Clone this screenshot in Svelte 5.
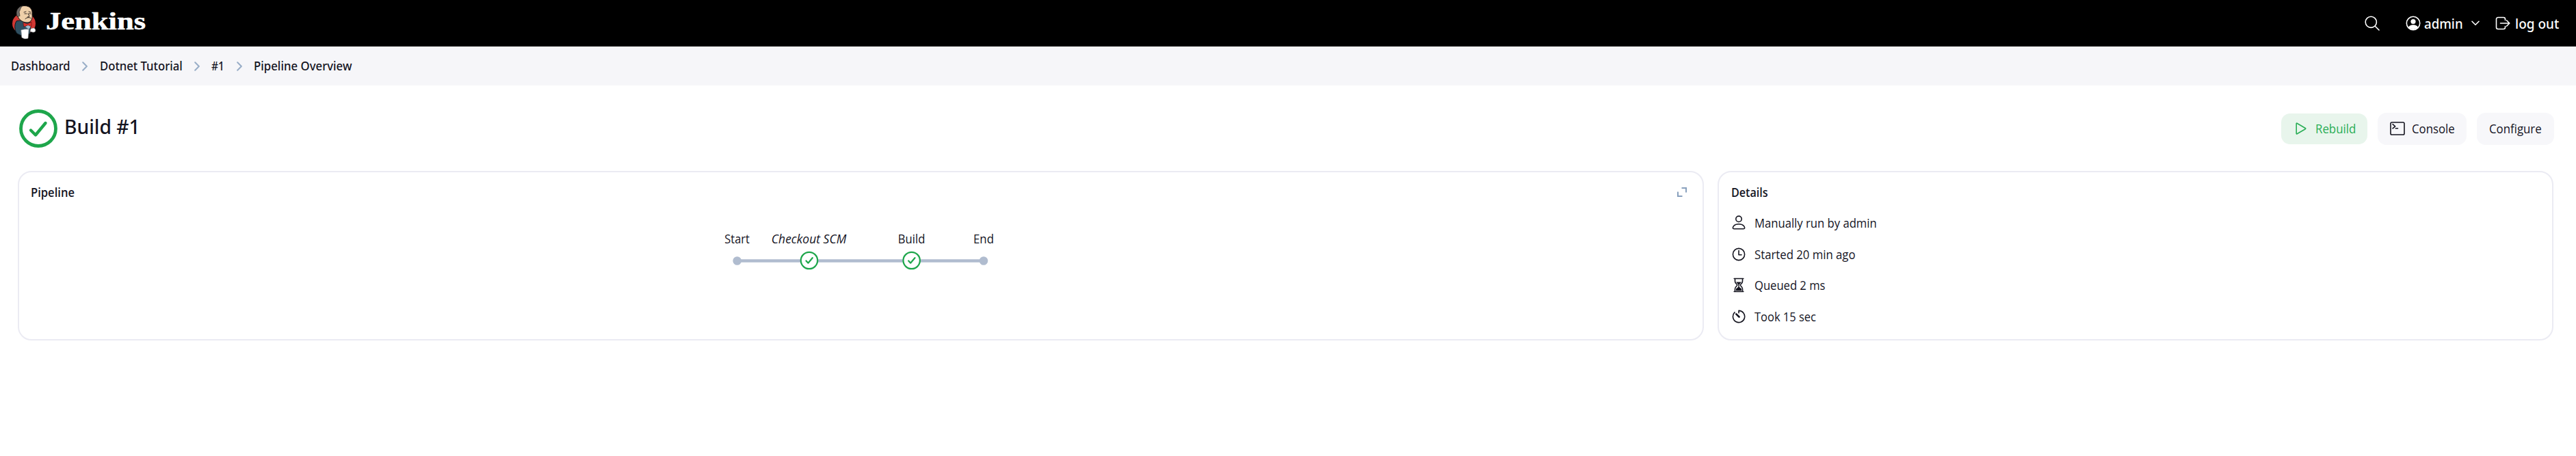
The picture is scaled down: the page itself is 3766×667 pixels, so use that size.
<script>
  const crumbs = [
    { text: 'Dashboard', width: 86.6 },
    { text: 'Dotnet Tutorial', width: 120.8 },
    { text: '#1', width: 19 },
    { text: 'Pipeline Overview', width: 143.5 }
  ];
  const details = [
    { icon: 'person', text: 'Manually run by admin', width: 178.7 },
    { icon: 'clock', text: 'Started 20 min ago', width: 147.5 },
    { icon: 'hourglass', text: 'Queued 2 ms', width: 103.4 },
    { icon: 'timer', text: 'Took 15 sec', width: 90 }
  ];
</script>

{#snippet label(text, width, size, weight)}
  <svg class="label" class:medium={weight === 500} {width} height="24">
    <text x="0" y={12 + size * 0.388} font-size={size} font-weight={weight} textLength={width} lengthAdjust="spacingAndGlyphs">{text}</text>
  </svg>
{/snippet}

<header class="top">
  <div class="brand">
    <svg class="mascot" width="36" height="52" viewBox="0 0 36 52">
      <ellipse cx="18" cy="28.500" rx="17" ry="15.500" fill="#d33833" />
      <path d="M7 25 C3 31 5 40 8 43 L16 47 L27 43 L28 27 L20 23 Z" fill="#2f4f60" stroke="#0d1a22" stroke-width="1" />
      <path d="M8 14 C7 5 13 2.500 19 2.500 C27 2.500 31 8 30 15 C31 22 28 27 23 27 C15 27 9 22 8 14Z" fill="#efd0aa" stroke="#1b1512" stroke-width="1" />
      <path d="M8 18 C5 11 9 4 16 2.500 C12 6 13 9 11 11 L12 17Z" fill="#6f6b68" stroke="#1b1512" stroke-width=".6" />
      <path d="M18 12l3-1M25 11l3 1M19 14h3M25 14h3M24 14l2 4-3 1M20 21.500q4-3.500 8-1" fill="none" stroke="#352b25" stroke-width="1" />
      <path d="M17 27l6 2 6-3v7l-5-2-6 2z" fill="#d7302b" stroke="#5d1210" stroke-width=".6" />
      <path d="M20 33l4-2 4 2-3 4z" fill="#9fbdd0" />
      <path d="M14 38q6-2 11-1l-1 13q-5 2-9-1z" fill="#fff" stroke="#aaa" stroke-width=".6" />
      <path d="M28 36q6-3 7 2q0 4-5 3l-3-1z" fill="#fff" stroke="#666" stroke-width=".6" />
    </svg>
    <svg class="word" width="146" height="40"><text x="0" y="28.500" textLength="146" lengthAdjust="spacingAndGlyphs">Jenkins</text></svg>
  </div>
  <nav class="tools">
    <svg class="search" width="22" height="22" viewBox="0 0 22 22"><circle cx="9.300" cy="9.300" r="8.100" /><path d="M15.200 15.200l5.800 5.800" /></svg>
    <svg class="avatar" width="22" height="22" viewBox="0 0 22 22"><circle cx="11" cy="11" r="9.700" /><circle cx="11" cy="8.500" r="3.600" class="solid" /><path d="M4 17c2-5 12-5 14 0c-3 4-11 4-14 0z" class="solid" /></svg>
    {@render label('admin', 56.6, 20, 500)}
    <svg class="caret" width="12" height="8" viewBox="0 0 12 8"><path d="M1 1.300l5 5 5-5" /></svg>
    <svg class="exit" width="22" height="20" viewBox="0 0 22 20"><path d="M14.500 5.500V4a2.500 2.500 0 0 0-2.500-2.500H4A2.500 2.500 0 0 0 1.500 4v12A2.500 2.500 0 0 0 4 18.500h8a2.500 2.500 0 0 0 2.500-2.500v-1.500M7.500 10h13.300M16.500 5.800l4.300 4.200-4.300 4.200" /></svg>
    {@render label('log out', 64.3, 20, 500)}
  </nav>
</header>

<div class="crumbs">
  {#each crumbs as c, i}
    {#if i}<svg class="sep" width="8" height="14" viewBox="0 0 8 14"><path d="M1.200 1.300L6.900 7l-5.700 5.700" /></svg>{/if}
    {@render label(c.text, c.width, 18, 500)}
  {/each}
</div>

<main>
  <div class="titlebar">
    <svg class="status" width="56" height="56" viewBox="0 0 56 56"><circle cx="28" cy="28" r="25.500" stroke-width="4.800" /><path d="M17 30.500l7 7L38.500 20" stroke-width="4.400" /></svg>
    <h1>{@render label('Build #1', 110.7, 29, 500)}</h1>
    <div class="actions">
      <button class="rebuild"><svg width="16" height="18" viewBox="0 0 16 18"><path d="M2 1.200Q1.200 1 1.200 2v14q0 1.200 1 .7L14.300 9.700q.9-.6 0-1.200z" /></svg>{@render label('Rebuild', 59.3, 18, 400)}</button>
      <button class="console"><svg width="22" height="20" viewBox="0 0 22 20"><rect x="1" y="1" width="20" height="18" rx="1.800" /><path d="M4 3.700L7.700 6.800 4 9.800M8.300 9.800h3.200" /></svg>{@render label('Console', 62.8, 18, 400)}</button>
      <button class="configure">{@render label('Configure', 76.7, 18, 400)}</button>
    </div>
  </div>

  <div class="cards">
    <section class="card">
      <div class="head">
        <h2>{@render label('Pipeline', 64, 18, 600)}</h2>
        <svg class="expand" width="14" height="14" viewBox="0 0 14 14"><path d="M6.500 1H13v6.500M1 6.500V13h6.500" /></svg>
      </div>
      <svg class="graph" width="420" height="70" viewBox="1048 330 420 70">
        <path d="M1077.700 381.500H1438" class="rail" />
        <circle cx="1077.700" cy="381.500" r="6.300" class="dot" />
        <circle cx="1438" cy="381.500" r="6.300" class="dot" />
        {#each [1183, 1332.7] as x}
          <circle cx={x} cy="381" r="12.200" class="node" />
          <path d="M{x - 4.5} 381.500l3 3.200 6.300-7.500" class="tick" />
        {/each}
        <g font-size="18">
          <text x="1059.300" y="356" textLength="36.500" lengthAdjust="spacingAndGlyphs">Start</text>
          <text x="1127.800" y="356" textLength="109.500" lengthAdjust="spacingAndGlyphs" font-style="italic">Checkout SCM</text>
          <text x="1312.800" y="356" textLength="39.700" lengthAdjust="spacingAndGlyphs">Build</text>
          <text x="1423" y="356" textLength="30" lengthAdjust="spacingAndGlyphs">End</text>
        </g>
      </svg>
    </section>
    <section class="card info">
      <div class="head"><h2>{@render label('Details', 53.6, 18, 600)}</h2></div>
      <ul>
        {#each details as d}
          <li>
            <svg class="glyph" width="20" height="22" viewBox="0 0 20 22">
              {#if d.icon === 'person'}
                <circle cx="10" cy="5.300" r="4.200" /><path d="M3.200 19.800C.6 19.800 1.200 16.800 2.800 15.200 6 12 14 12 17.200 15.200c1.600 1.600 2.200 4.600-.4 4.600z" />
              {:else if d.icon === 'clock'}
                <circle cx="10" cy="11" r="8.600" /><path d="M10 5.500v6.300h4" />
              {:else if d.icon === 'hourglass'}
                <path d="M3.200 1.500h13.600M3.200 20.500h13.600M4.500 2v3.500c0 3 3.200 4 3.200 5.500s-3.200 2.500-3.200 5.500V20M15.500 2v3.500c0 3-3.200 4-3.200 5.500s3.200 2.500 3.200 5.500V20" /><path d="M6 6.500h8L10.700 10.200v3.600l3.300 2.700v2.700H6v-2.700l3.300-2.700v-3.600z" class="solid" />
              {:else}
                <path d="M10 5.800V2.400a8.600 8.600 0 1 1-6 2.500" /><path d="M6.300 7.300l4.200 4.200" stroke-width="2.600" />
              {/if}
            </svg>
            {@render label(d.text, d.width, 18, 400)}
          </li>
        {/each}
      </ul>
    </section>
  </div>
</main>

<style>
  :global(body) { margin: 0; background: #fff; color: #14141f; font: 18px/24px 'Open Sans', 'Noto Sans', sans-serif; }
  svg { display: block; flex: none; fill: none; stroke: currentColor; stroke-width: 1.600; stroke-linecap: round; stroke-linejoin: round; }
  .label { overflow: visible; }
  .medium { font-family: 'Noto Sans', sans-serif; }
  text { fill: currentColor; stroke: none; }
  .solid { fill: currentColor; stroke: none; }
  h1, h2, ul { margin: 0; padding: 0; }
  .top { height: 68px; background: #000; color: #fff; display: flex; justify-content: space-between; box-sizing: border-box; padding: 0 25px 0 17px; }
  .brand { display: flex; align-items: center; gap: 14px; }
  .mascot { stroke: none; margin-bottom: 4px; }
  .word { font: bold 35px 'Liberation Serif', serif; overflow: visible; }
  .word text { stroke: currentColor; stroke-width: .5; }
  .tools { display: flex; align-items: center; padding-bottom: 1px; }
  .search { margin-right: 38px; }
  .avatar { margin-right: 5px; }
  .caret { margin: 0 23.500px 0 12.500px; }
  .exit { margin-right: 6.500px; }
  .crumbs { height: 57px; background: #f6f6f9; display: flex; align-items: center; gap: 17.500px; box-sizing: border-box; padding: 0 0 1px 16px; }
  .sep { color: #98adc7; stroke-width: 2; margin-top: 2px; }
  main { padding: 30px 32px 0 26px; }
  .titlebar { display: flex; align-items: center; height: 66px; }
  .status { color: #1ea64b; margin-left: 2px; }
  h1 { margin: 0 0 7px 9.700px; }
  .actions { margin-left: auto; display: flex; align-items: center; gap: 15px; }
  button { display: flex; align-items: center; box-sizing: border-box; height: 47px; border: 0; border-radius: 13px; background: #f7f7fa; color: inherit; font: inherit; padding: 0 18.300px; }
  .rebuild { width: 126px; height: 45px; background: #e8f5ec; color: #2aae56; padding-left: 21px; gap: 12.500px; }
  .console { width: 130px; gap: 9.500px; }
  .configure { width: 113px; }
  .cards { display: flex; gap: 20px; margin-top: 29px; }
  .card { box-sizing: border-box; width: 2465px; height: 248px; border: 2px solid #ebebf3; border-radius: 20px; padding: 17px 23px 0 17px; }
  .info { width: 1222px; padding-left: 18px; }
  .head { display: flex; justify-content: space-between; align-items: center; }
  .expand { color: #88a0bd; stroke-width: 2; stroke-linecap: butt; stroke-linejoin: miter; }
  .graph { margin: 37px 0 0 1003px; }
  .rail { stroke: #b0bccf; stroke-width: 4.600; stroke-linecap: butt; }
  .dot { fill: #b0bccf; stroke: none; }
  .node { fill: #fff; stroke: #1ea64b; stroke-width: 2.200; }
  .tick { stroke: #1ea64b; stroke-width: 2.200; }
  ul { list-style: none; margin-top: 10px; }
  li { display: flex; align-items: center; height: 45.800px; gap: 13px; }
  .glyph { margin-left: 1px; }
</style>
